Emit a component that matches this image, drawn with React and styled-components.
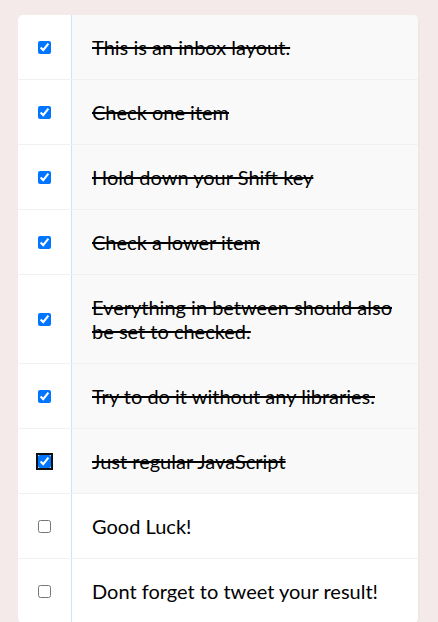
import { useState, useRef } from "react";
import styled, { createGlobalStyle } from "styled-components";

const GlobalStyle = createGlobalStyle`
  html {
    background: #f4eaea;
  }
  body {
    margin: 0;
    font-family: "Lato", "Noto Sans", sans-serif;
  }
`;

const Inbox = styled.div`
  width: 400px;
  margin: 15px 0 0 18px;
  background: #ffffff;
  border-radius: 5px;
  box-shadow: 1px 1px 2px rgba(0, 0, 0, 0.03);
  overflow: hidden;
`;

const Item = styled.label`
  display: flex;
  align-items: center;
  border-bottom: 1px solid #f1f1f1;

  &:last-child {
    border-bottom: 0;
  }
`;

const Check = styled.input`
  margin: 20px;
  width: 13px;
  height: 13px;
  flex-shrink: 0;
  border-radius: 2px;
  outline: ${(p) => (p.$focused ? "2px solid #101010" : "none")};
  outline-offset: 0;
`;

const Text = styled.p`
  margin: 0;
  padding: 20px;
  flex: 1;
  font-size: 20px;
  line-height: 24px;
  font-weight: 400;
  color: #000000;
  border-left: 1px solid #d1e2ff;
  background: ${(p) => (p.$checked ? "#f9f9f9" : "#ffffff")};
  text-decoration: ${(p) => (p.$checked ? "line-through" : "none")};
  text-decoration-thickness: 2px;
`;

const items = [
  "This is an inbox layout.",
  "Check one item",
  "Hold down your Shift key",
  "Check a lower item",
  "Everything in between should also be set to checked.",
  "Try to do it without any libraries.",
  "Just regular JavaScript",
  "Good Luck!",
  "Dont forget to tweet your result!",
];

const App = () => {
  const [checked, setChecked] = useState(items.map((_, i) => i < 7));
  const [focused, setFocused] = useState(6);
  const last = useRef(6);

  const handleClick = (i, e) => {
    const next = [...checked];
    const value = !checked[i];
    next[i] = value;
    if (e.shiftKey && value) {
      const [a, b] = [Math.min(i, last.current), Math.max(i, last.current)];
      for (let k = a; k <= b; k++) next[k] = true;
    }
    last.current = i;
    setFocused(i);
    setChecked(next);
  };

  return (
    <>
      <GlobalStyle />
      <Inbox>
        {items.map((text, i) => (
          <Item key={i}>
            <Check
              type="checkbox"
              checked={checked[i]}
              $focused={focused === i}
              onChange={() => {}}
              onClick={(e) => handleClick(i, e)}
            />
            <Text $checked={checked[i]}>{text}</Text>
          </Item>
        ))}
      </Inbox>
    </>
  );
};

export default App;
